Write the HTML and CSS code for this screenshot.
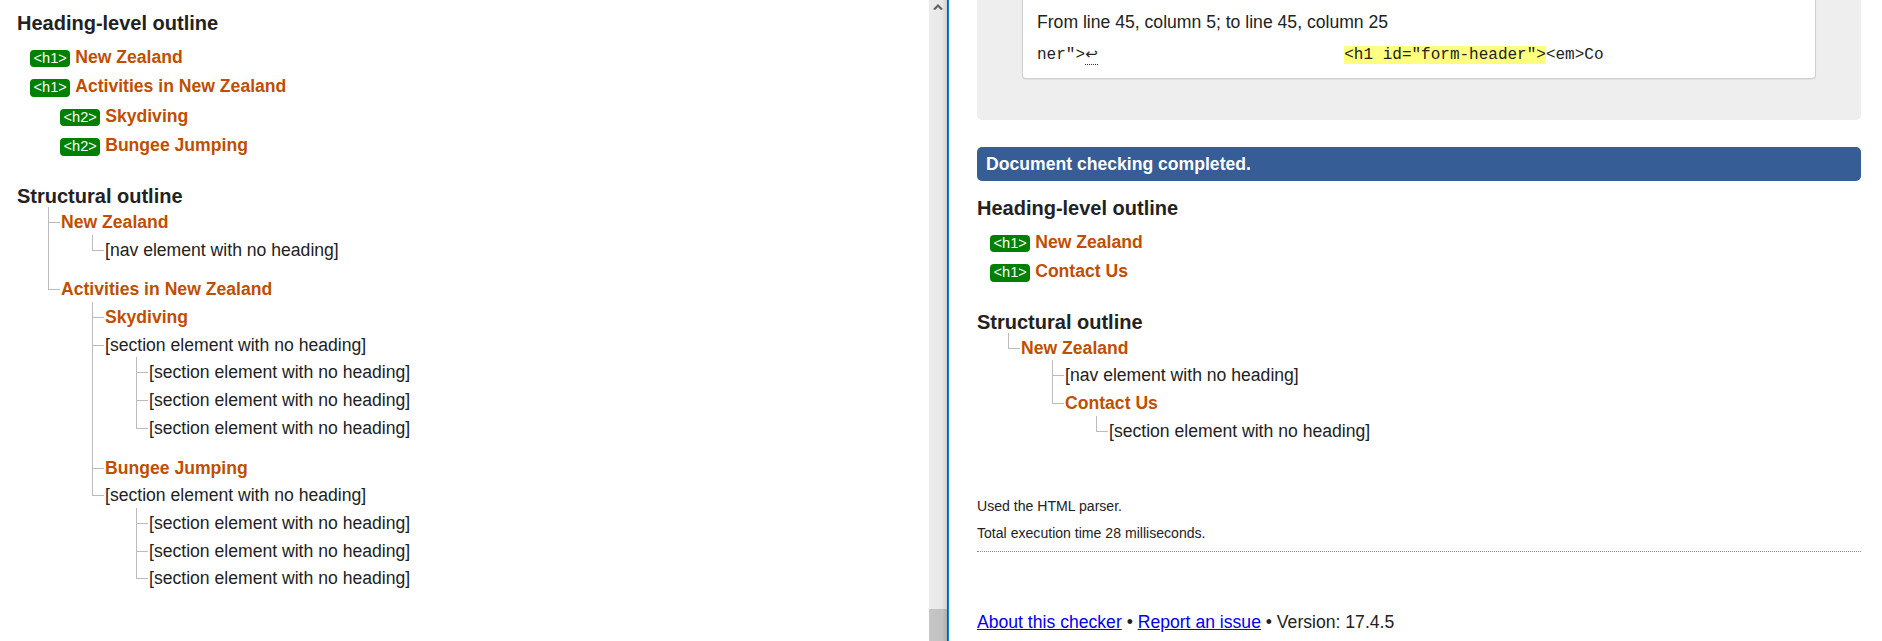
FILE: index.html
```html
<!DOCTYPE html>
<html lang="en">
<head>
<meta charset="utf-8">
<title>Outline</title>
<link rel="stylesheet" href="styles.css">
</head>
<body>
<div class="left">
  <h2 class="sec-title top">Heading-level outline</h2>
  <ol class="hl">
    <li><span class="badge">&lt;h1&gt;</span> <span class="hd">New Zealand</span></li>
    <li><span class="badge">&lt;h1&gt;</span> <span class="hd">Activities in New Zealand</span></li>
    <li class="lv2"><span class="badge">&lt;h2&gt;</span> <span class="hd">Skydiving</span></li>
    <li class="lv2"><span class="badge">&lt;h2&gt;</span> <span class="hd">Bungee Jumping</span></li>
  </ol>
  <h2 class="sec-title">Structural outline</h2>
  <ol class="tree root">
    <li class="parent"><span class="hd">New Zealand</span>
      <ol class="tree">
        <li>[nav element with no heading]</li>
      </ol>
    </li>
    <li class="parent"><span class="hd">Activities in New Zealand</span>
      <ol class="tree">
        <li><span class="hd">Skydiving</span></li>
        <li class="parent">[section element with no heading]
          <ol class="tree">
            <li>[section element with no heading]</li>
            <li>[section element with no heading]</li>
            <li>[section element with no heading]</li>
          </ol>
        </li>
        <li><span class="hd">Bungee Jumping</span></li>
        <li class="parent">[section element with no heading]
          <ol class="tree">
            <li>[section element with no heading]</li>
            <li>[section element with no heading]</li>
            <li>[section element with no heading]</li>
          </ol>
        </li>
      </ol>
    </li>
  </ol>
</div>
<div class="scrollbar">
  <svg class="arrow" width="10" height="7" viewBox="0 0 10 7"><path d="M0 6 L5 1 L10 6 L8 7 L5 4 L2 7 Z" fill="#606060"/></svg>
  <div class="thumb"></div>
</div>
<div class="divider"></div>
<div class="right">
  <div class="msgbox">
    <div class="extract">
      <p class="loc">From line 45, column 5; to line 45, column 25</p>
      <code class="code">ner"&gt;<span class="lf">↩</span>                          <b class="mark">&lt;h1 id="form-header"&gt;</b>&lt;em&gt;Co</code>
    </div>
  </div>
  <div class="success">Document checking completed.</div>
  <h2 class="sec-title after-bar">Heading-level outline</h2>
  <ol class="hl">
    <li><span class="badge">&lt;h1&gt;</span> <span class="hd">New Zealand</span></li>
    <li><span class="badge">&lt;h1&gt;</span> <span class="hd">Contact Us</span></li>
  </ol>
  <h2 class="sec-title">Structural outline</h2>
  <ol class="tree root">
    <li class="parent"><span class="hd">New Zealand</span>
      <ol class="tree">
        <li>[nav element with no heading]</li>
        <li class="parent"><span class="hd">Contact Us</span>
          <ol class="tree">
            <li>[section element with no heading]</li>
          </ol>
        </li>
      </ol>
    </li>
  </ol>
  <p class="meta first">Used the HTML parser.</p>
  <p class="meta">Total execution time 28 milliseconds.</p>
  <div class="rule"></div>
  <p class="footer"><a href="#">About this checker</a> • <a href="#">Report an issue</a> • Version: 17.4.5</p>
</div>
</body>
</html>
```

FILE: styles.css
```css
html, body {
  margin: 0;
  padding: 0;
}

body {
  display: flex;
  height: 641px;
  overflow: hidden;
  font-family: "Liberation Sans", Arial, sans-serif;
  font-size: 17.6px;
  color: #222;
  background: #fff;
}

.left {
  flex: none;
  width: 929px;
  box-sizing: border-box;
  padding: 11.6px 0 0 17px;
  overflow: hidden;
}

.scrollbar {
  flex: none;
  width: 18px;
  display: flex;
  flex-direction: column;
  justify-content: space-between;
  align-items: center;
  background: linear-gradient(to right, #ececec 0%, #e8e8e8 70%, #d2d2d2 100%);
}

.arrow {
  display: block;
  margin-top: 3px;
}

.thumb {
  width: 100%;
  height: 32px;
  background: linear-gradient(to right, #c6c6c6 0%, #c1c1c1 75%, #aeaeae 100%);
}

.divider {
  flex: none;
  width: 2px;
  background: linear-gradient(to right, #24508f 50%, #1780e8 50%);
}

.right {
  flex: 1;
  min-width: 0;
  padding: 0 21px 0 28px;
}

.sec-title {
  margin: 24px 0 0;
  font-size: 20px;
  line-height: 23px;
  font-weight: bold;
  color: #222;
}

.sec-title.top {
  margin-top: 0;
}

.sec-title.after-bar {
  margin-top: 15.6px;
}

.hd {
  color: #bf4f00;
  font-weight: bold;
}

/* heading-level outline */
.hl {
  list-style: none;
  margin: 8px 0 0;
  padding: 0 0 0 13px;
}

.hl li {
  line-height: 29.6px;
}

.hl li.lv2 {
  padding-left: 30px;
}

.badge {
  display: inline-block;
  background: #008000;
  color: #fff;
  font-size: 14.6px;
  line-height: 17.4px;
  padding: 0 3.5px;
  border-radius: 4px;
}

/* structural outline tree */
.tree {
  list-style: none;
  margin: 0;
  padding: 0 0 0 31px;
}

.tree.root {
  margin-top: 1px;
}

.tree li {
  position: relative;
  padding-left: 13px;
  line-height: 27.7px;
}

.tree li.parent {
  padding-bottom: 12px;
}

.tree li::before {
  content: "";
  position: absolute;
  left: 0;
  top: -2px;
  width: 11px;
  height: 15px;
  border-left: 1px solid #bbb;
  border-bottom: 1px solid #bbb;
}

.tree li:not(:last-child)::after {
  content: "";
  position: absolute;
  left: 0;
  top: 0;
  bottom: 0;
  border-left: 1px solid #bbb;
}

/* message box */
.msgbox {
  background: #eee;
  padding: 0 45px 41px;
  border-radius: 0 0 5px 5px;
}

.extract {
  background: #fff;
  border: 1px solid #cfcfcf;
  border-top: none;
  border-radius: 0 0 4px 4px;
  padding: 10px 14px 13.3px;
  box-shadow: 0 1px 1px rgba(0, 0, 0, 0.05);
}

.loc {
  margin: 0;
  line-height: 24px;
}

.code {
  display: block;
  margin-top: 10px;
  font-family: "Liberation Mono", "DejaVu Sans Mono", monospace;
  font-size: 16px;
  line-height: 20px;
  white-space: pre;
  color: #222;
}

.lf {
  display: inline-block;
  width: 13px;
  margin-right: -3.4px;
  font-family: "DejaVu Sans", sans-serif;
  font-size: 15px;
  line-height: 20px;
  text-align: center;
  border-bottom: 1px dotted #333;
  vertical-align: baseline;
}

.mark {
  font-weight: normal;
  background: #ffff80;
}

.success {
  margin-top: 26.7px;
  height: 34px;
  line-height: 34px;
  padding: 0 9px;
  background: #365d95;
  color: #fff;
  font-weight: bold;
  border-radius: 5px;
}

.meta {
  margin: 0;
  font-size: 14.08px;
  line-height: 26.7px;
  color: #222;
}

.meta.first {
  margin-top: 23.7px;
}

.rule {
  margin-top: 4px;
  border-top: 1px dotted #888;
}

.footer {
  margin: 58.5px 0 0;
  line-height: 24px;
  color: #222;
}

.footer a {
  color: #0000ee;
  text-decoration: underline;
}
```
